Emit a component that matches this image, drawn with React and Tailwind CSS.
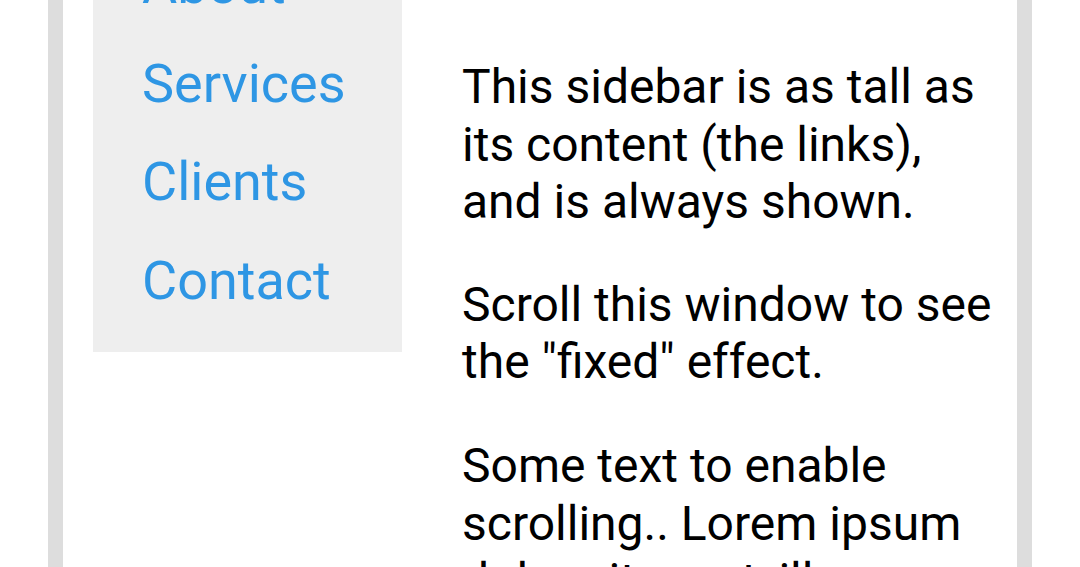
import React from 'react';

const links = ['About', 'Services', 'Clients', 'Contact'];

export default function App() {
  return (
    <div className="h-[567px] w-[1080px] overflow-hidden bg-white px-[48px] font-['Roboto',sans-serif]">
      {/* Page frame with gray side borders */}
      <div className="flex h-full border-x-[15px] border-[#dddddd] pl-[30px]">
        {/* Sidebar */}
        <nav className="mt-[-64px] w-[309px] shrink-0 self-start bg-[#eeeeee] pb-[22px] pl-[49px]">
          {links.map((link) => (
            <a
              key={link}
              href="#"
              className="block text-[54px] leading-[98.5px] text-[#2e96e4]"
            >
              {link}
            </a>
          ))}
        </nav>

        {/* Main content */}
        <main className="ml-[60px] w-[540px] pt-[58px] text-[48px] leading-[57.6px] text-black">
          <p>This sidebar is as tall as its content (the links), and is always shown.</p>
          <p className="mt-[45px]">Scroll this window to see the "fixed" effect.</p>
          <p className="mt-[46px]">
            Some text to enable scrolling.. Lorem ipsum dolor sit amet, illum definitiones no quo,
            maluisset concludaturque et eum, altera fabulas ut quo.
          </p>
        </main>
      </div>
    </div>
  );
}
